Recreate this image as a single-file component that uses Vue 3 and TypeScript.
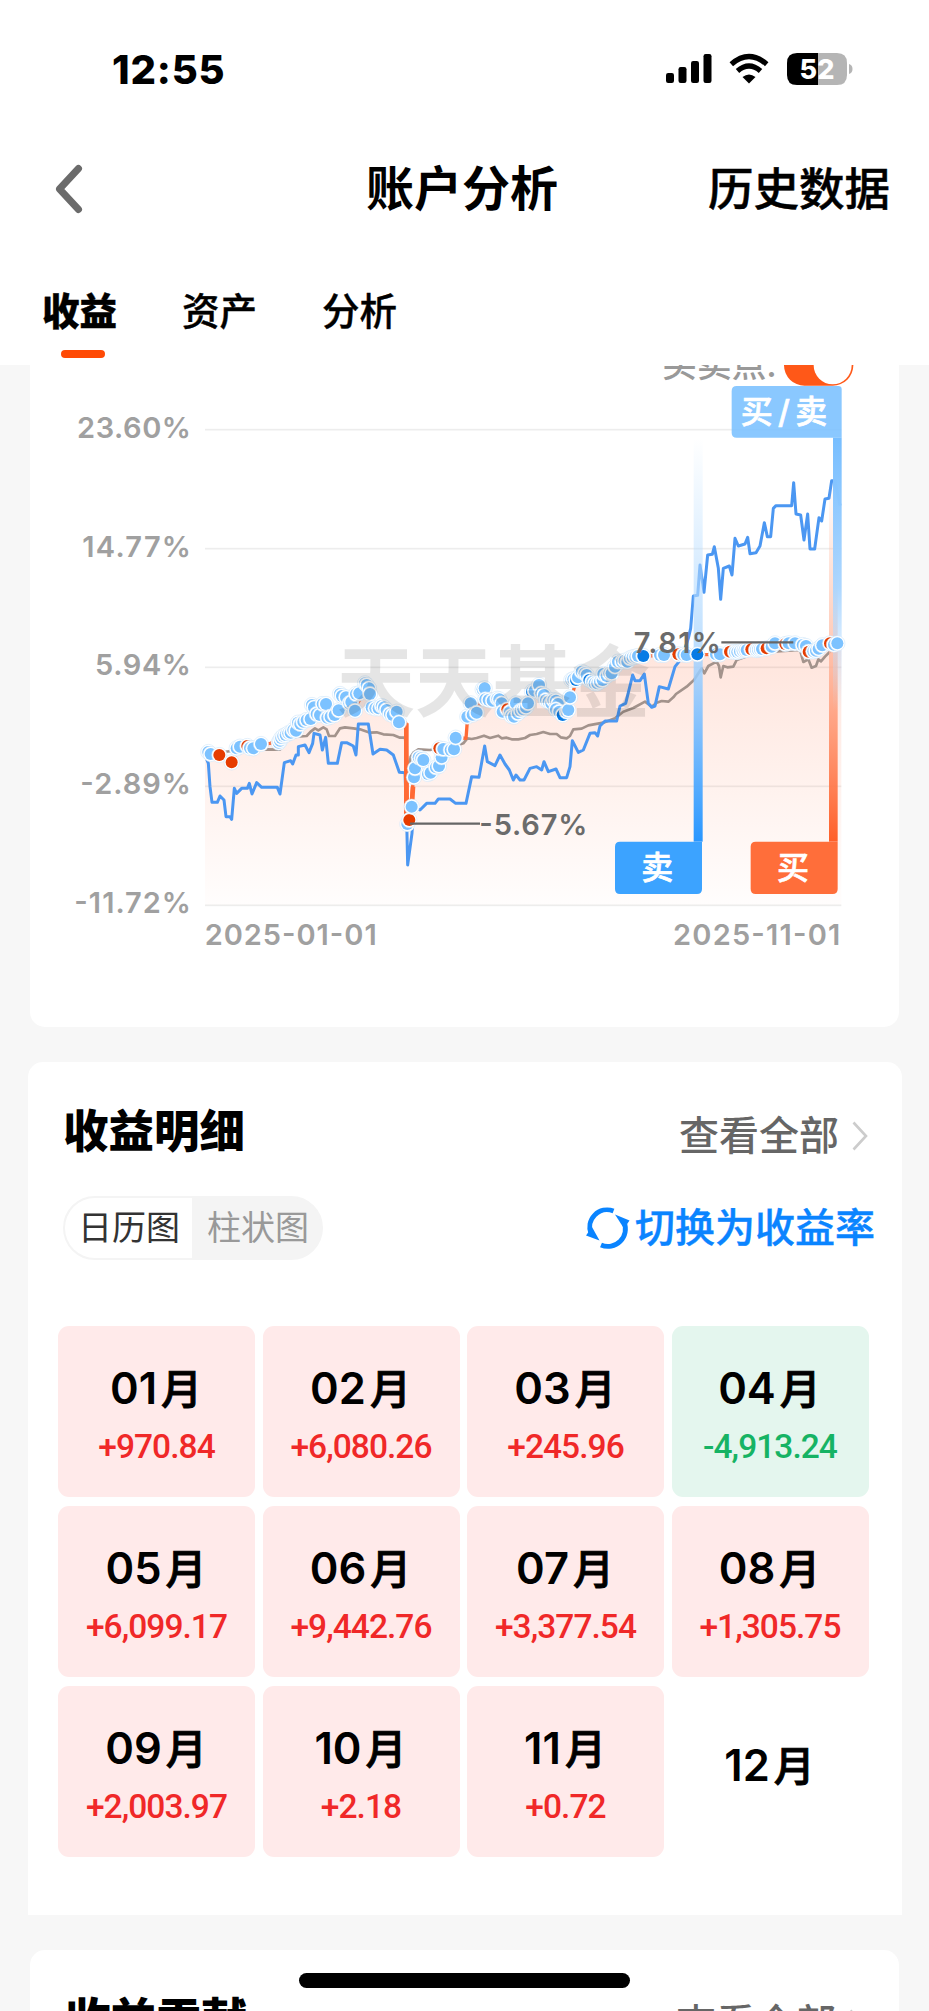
<script setup lang="ts">
interface Month {
  label: string
  amount?: string
}

interface Dot {
  x: number
  y: number
  kind: 'light' | 'dark' | 'red'
}

const tabs = ['收益', '资产', '分析']

const months: Month[] = [
  { label: '01', amount: '+970.84' },
  { label: '02', amount: '+6,080.26' },
  { label: '03', amount: '+245.96' },
  { label: '04', amount: '-4,913.24' },
  { label: '05', amount: '+6,099.17' },
  { label: '06', amount: '+9,442.76' },
  { label: '07', amount: '+3,377.54' },
  { label: '08', amount: '+1,305.75' },
  { label: '09', amount: '+2,003.97' },
  { label: '10', amount: '+2.18' },
  { label: '11', amount: '+0.72' },
  { label: '12' },
]

const tone = (m: Month): string => (!m.amount ? 'empty' : m.amount.startsWith('-') ? 'loss' : 'gain')

const axis = [
  { y: -571, label: '23.60%', w: 342 },
  { y: -214, label: '14.77%', w: 326 },
  { y: 142, label: '5.94%', w: 288 },
  { y: 499, label: '-2.89%', w: 332 },
  { y: 856, label: '-11.72%', w: 350 },
]

const account =
  '45,400 90,403 125,425 150,382 213,372 240,370 270,362 300,338 330,315 362,290 370,262 408,255 446,268 452,230 495,262 530,205 545,258 590,268 620,280 648,310 653,612 662,560 670,480 676,445 690,418 720,455 747,435 790,385 797,353 828,355 833,290 842,250 860,275 884,208 935,250 965,285 1000,268 1030,220 1047,198 1090,242 1130,280 1158,185 1195,160 1220,185 1260,165 1290,125 1340,110 1430,105 1590,103 1690,88 1755,70 1815,68 1850,90 1895,80 1940,70'
const areaPoints = `${account} 1954,70 1954,856 45,856`

const benchmark =
  '45,402 100,396 150,390 230,388 270,389 285,365 300,355 320,350 350,348 362,335 375,325 385,331 400,322 410,328 417,348 435,348 450,325 465,322 490,325 510,328 540,338 560,337 580,343 610,345 630,353 645,353 655,460 662,410 670,398 685,388 720,390 760,382 790,380 820,370 832,355 845,357 860,354 882,347 900,354 925,347 935,355 950,353 965,358 985,358 1005,354 1020,345 1040,342 1060,336 1080,342 1100,342 1112,352 1130,355 1140,348 1150,328 1175,326 1195,316 1240,308 1275,295 1300,275 1330,264 1365,245 1385,260 1400,248 1415,243 1435,245 1450,232 1458,222 1490,200 1512,180 1535,145 1543,160 1555,138 1580,125 1587,138 1592,172 1600,138 1612,142 1630,140 1640,120 1700,98 1830,90 1840,126 1855,118 1865,143 1878,138 1885,118 1893,124 1905,110 1925,90'

const indexLine =
  '45,405 55,430 60,500 66,547 82,547 90,528 102,540 108,590 120,590 125,598 133,505 140,520 155,505 172,505 178,490 186,522 200,488 215,502 262,502 270,522 283,428 302,422 308,432 318,405 325,405 325,380 345,375 357,398 368,370 372,340 390,345 397,390 407,352 415,430 442,430 455,368 470,368 490,378 498,405 505,312 535,312 549,402 570,388 590,390 610,405 628,457 645,458 650,600 653,735 666,640 670,560 690,570 710,550 735,550 745,537 780,537 797,550 828,550 845,470 867,472 884,378 892,425 915,437 930,405 945,432 958,450 970,480 978,465 990,480 1002,480 1020,445 1040,440 1055,450 1062,425 1075,455 1098,447 1110,473 1130,473 1140,440 1147,362 1165,397 1180,390 1200,340 1215,338 1223,348 1230,318 1245,303 1280,303 1290,258 1307,250 1328,165 1335,182 1350,182 1363,162 1375,250 1385,262 1395,258 1408,200 1435,207 1455,140 1475,115 1495,55 1502,25 1510,-72 1523,-74 1530,-165 1542,-83 1553,-195 1567,-197 1573,-220 1585,-155 1592,-62 1600,-155 1618,-162 1626,-135 1635,-245 1645,-222 1665,-228 1673,-248 1680,-199 1698,-202 1710,-222 1723,-292 1732,-250 1742,-250 1750,-335 1758,-343 1805,-343 1811,-412 1818,-318 1832,-315 1842,-240 1853,-318 1860,-213 1874,-213 1887,-307 1895,-297 1905,-363 1917,-365 1925,-418 1935,-418 1950,-343'

const parseDots = (source: string): Dot[] =>
  source.split(' ').map((entry) => {
    const [x, y, k] = entry.split(',')
    return { x: Number(x), y: Number(y), kind: k === 'r' ? 'red' : k === 'd' ? 'dark' : 'light' }
  })

const dots = parseDots(
  '55,396 62,402 88,405,r 125,427,r 140,385 150,380 172,378,r 180,384 190,385 213,372 266,368 270,362 274,354 280,348 287,345 295,340 302,338 310,330 318,332 324,308 331,312 340,305 350,300 362,297 366,255 372,262 380,282 390,285 398,252 408,252 412,293 422,290 434,285 446,271 450,222 456,228 468,232 478,250 484,246 495,272 498,222 508,220 525,190 530,195 537,205 540,222 545,262 556,265 566,265 575,258 582,262 590,270 600,282 608,285 620,275 627,307 652,612 658,600,r 665,560 672,472 675,445 686,412 694,415 700,420 714,462 722,458 738,442 747,438 755,412 748,385,r 760,387 782,390 792,388 797,353 832,290 842,250 848,284 860,278 878,208 884,205 886,238 896,240 908,242 922,236 928,238 935,250 938,275 952,268,r 960,276 964,288 972,290 978,250 984,280 992,272 1000,268 1008,262 1026,215,d 1034,212 1014,250 1047,195 1054,220 1062,225 1068,240 1076,245 1084,250 1090,240 1098,242 1104,252 1098,268 1108,275 1118,285,d 1130,275 1135,270 1140,232 1144,180 1150,178 1158,180,d 1164,172 1175,155 1184,160 1190,165 1198,180,d 1207,185 1214,190 1222,190 1230,185 1238,180 1240,162 1250,168 1258,160 1265,160 1275,140 1284,125 1296,125 1304,122 1312,125 1320,115 1328,112 1336,110 1344,108 1360,108,d 1410,105 1422,105 1465,103,r 1480,104 1490,105 1522,103,d 1578,103 1590,103 1620,95,r 1635,96 1642,96 1650,94 1658,92 1664,90 1670,90 1684,88,r 1698,90 1704,89 1710,88 1716,87 1730,85,r 1745,80 1755,70 1786,72,r 1796,70 1815,70 1838,75 1848,78 1856,95,r 1870,94 1878,92 1886,86 1897,76 1920,70,r 1932,74 1942,70',
)
</script>

<template>
  <div class="screen">
    <header class="top">
      <div class="status">
        <span class="clock">12:55</span>
        <svg class="status-icons" viewBox="0 0 190 40" width="190" height="40">
          <rect x="1" y="23" width="8" height="10" rx="2.2" />
          <rect x="13.500" y="17" width="8" height="16" rx="2.2" />
          <rect x="26" y="11" width="8" height="22" rx="2.2" />
          <rect x="38.500" y="4" width="8" height="29" rx="2.2" />
          <g fill="none" stroke="#000" stroke-width="5.300">
            <path d="M66.300 14.200Q84 -1.200 101.700 14.200" />
            <path d="M72.500 21Q84 11.200 95.500 21" />
          </g>
          <path d="M77.500 27Q84 22 90.500 27L84 33.500Z" />
          <path d="M132 3H153V35H132Q122 35 122 25V13Q122 3 132 3Z" />
          <path d="M153 3H172Q182 3 182 13V25Q182 35 172 35H153Z" fill="#b5b5b5" />
          <path d="M184 14Q187.500 15 187.500 19T184 24Z" fill="#b5b5b5" />
          <text x="152" y="28.500" text-anchor="middle" class="battery">52</text>
        </svg>
      </div>
      <nav class="navbar">
        <svg class="back" viewBox="0 0 30 50" width="30" height="50">
          <path d="M24.500 4.500L5.500 25L24.500 45.500" fill="none" stroke="#6b6b6b" stroke-width="7" stroke-linecap="round" stroke-linejoin="round" />
        </svg>
        <h1>账户分析</h1>
        <a class="history">历史数据</a>
      </nav>
      <div class="tabs">
        <span v-for="(tab, i) in tabs" :key="tab" :class="['tab', { active: i === 0 }]">{{ tab }}</span>
      </div>
    </header>

    <section class="card chart-card">
      <svg viewBox="-480 -765 2607 1986" width="869" height="662">
        <defs>
          <linearGradient id="area" x1="0" y1="0" x2="0" y2="1">
            <stop offset="0" stop-color="#ff4d14" stop-opacity=".15" />
            <stop offset="1" stop-color="#ff4d14" stop-opacity="0.01" />
          </linearGradient>
          <linearGradient id="sell" x1="0" y1="0" x2="0" y2="1">
            <stop offset="0" stop-color="#b9deff" stop-opacity="0" />
            <stop offset=".48" stop-color="#b5dbff" stop-opacity=".8" />
            <stop offset="1" stop-color="#2896ff" />
          </linearGradient>
          <linearGradient id="buy" x1="0" y1="0" x2="0" y2="1">
            <stop offset="0" stop-color="#ffb9a0" stop-opacity="0" />
            <stop offset=".45" stop-color="#ffb9a0" stop-opacity=".75" />
            <stop offset="1" stop-color="#ff5f28" />
          </linearGradient>
          <linearGradient id="both" x1="0" y1="0" x2="0" y2="1">
            <stop offset="0" stop-color="#77beff" />
            <stop offset=".55" stop-color="#a9d5ff" stop-opacity=".95" />
            <stop offset="1" stop-color="#c5e2ff" stop-opacity="0" />
          </linearGradient>
        </defs>

        <text class="switch-label" x="1417" y="-730">买卖点:</text>
        <rect x="1782" y="-826" width="208" height="123" rx="61.500" fill="#ff5818" />
        <circle cx="1928" cy="-764" r="57" fill="#fff" />

        <g v-for="line in axis" :key="line.label">
          <rect x="45" :y="line.y - 2.500" width="1909" height="5" fill="#ededed" />
          <text class="axis-text" :x="3 - line.w" :y="line.y + 24" :textLength="line.w">{{ line.label }}</text>
        </g>
        <text class="axis-text" x="44" y="975" textLength="516">2025-01-01</text>
        <text class="axis-text" x="1449" y="975" textLength="502">2025-11-01</text>

        <polygon :points="areaPoints" fill="url(#area)" />
        <polyline :points="benchmark" class="line benchmark" />
        <polyline :points="indexLine" class="line index" />
        <polyline :points="account" class="line account" />
        <path d="M649 310V600M669 500L666 550" stroke="#ff6a35" stroke-width="14" />
        <rect x="1511" y="-545" width="27" height="1210" fill="url(#sell)" />
        <rect x="1917" y="-420" width="26" height="1085" fill="url(#buy)" />
        <rect x="1929" y="-547" width="26" height="820" fill="url(#both)" />

        <g v-for="(dot, i) in dots" :key="i">
          <circle :cx="dot.x" :cy="dot.y" r="23" fill="#fff" stroke="#c9e3f8" stroke-width="1.500" />
          <circle :cx="dot.x" :cy="dot.y" r="18" :class="dot.kind" />
        </g>

        <text class="watermark" x="440" y="274">天天基金</text>

        <path d="M660 611H870M1594 67H1810" stroke="#666" stroke-width="7" />
        <text class="mark-text" x="868" y="644" textLength="324">-5.67%</text>
        <text class="mark-text" x="1331" y="99" textLength="262">7.81%</text>

        <path d="M1640 -702H1945Q1955 -702 1955 -692V-547H1640Q1625 -547 1625 -562V-687Q1625 -702 1640 -702Z" fill="#79c0ff" fill-opacity=".87" />
        <path d="M1290 665H1536V807Q1536 822 1521 822H1290Q1275 822 1275 807V680Q1275 665 1290 665Z" fill="#3ca3ff" />
        <path d="M1697 665H1943V807Q1943 822 1928 822H1697Q1682 822 1682 807V680Q1682 665 1697 665Z" fill="#ff6e3a" />
        <text class="tag" x="1782" y="-590" text-anchor="middle" textLength="260">买/卖</text>
        <text class="tag" x="1402" y="777" text-anchor="middle">卖</text>
        <text class="tag" x="1809" y="777" text-anchor="middle">买</text>
      </svg>
    </section>

    <section class="card detail">
      <div class="card-head">
        <h2>收益明细</h2>
        <a class="more">
          查看全部
          <svg viewBox="0 0 16 30" width="16" height="30">
            <path d="M1.500 1.500L14 15L1.500 28.500" fill="none" stroke="#ccc" stroke-width="2.600" />
          </svg>
        </a>
      </div>
      <div class="tools">
        <div class="segmented">
          <span class="seg on">日历图</span>
          <span class="seg">柱状图</span>
        </div>
        <a class="switch-mode">
          <svg viewBox="0 0 44 44" width="44" height="44">
            <g fill="none" stroke="#0a84ff" stroke-width="4.800">
              <path d="M27.500 5A17.500 17.500 0 0 0 5 28" />
              <path d="M15 39A17.500 17.500 0 0 0 38 16" />
            </g>
            <path d="M0 29.500L6 21L13.500 34.500Z" fill="#0a84ff" />
            <path d="M43.500 14.500L29 8.500L38 22.500Z" fill="#0a84ff" />
          </svg>
          <span>切换为收益率</span>
        </a>
      </div>
      <div class="months">
        <div v-for="m in months" :key="m.label" :class="['month', tone(m)]">
          <div class="name"><span class="num">{{ m.label }}</span><span class="yue">月</span></div>
          <div v-if="m.amount" class="amount">{{ m.amount }}</div>
        </div>
      </div>
    </section>

    <section class="card contribution">
      <div class="card-head">
        <h2>收益贡献</h2>
        <a class="more">
          查看全部
          <svg viewBox="0 0 16 30" width="16" height="30">
            <path d="M1.500 1.500L14 15L1.500 28.500" fill="none" stroke="#ccc" stroke-width="2.600" />
          </svg>
        </a>
      </div>
    </section>
    <div class="home-indicator"></div>
  </div>
</template>

<style>
body {
  background: #f7f7f7;
}
</style>

<style scoped>
.screen {
  position: relative;
  width: 929px;
  height: 2011px;
  overflow: hidden;
  background: #f7f7f7;
  color: #000;
  font-family: Inter, 'Noto Sans CJK SC', sans-serif;
}
.top {
  height: 365px;
  background: #fff;
}
.status {
  display: flex;
  justify-content: space-between;
  align-items: center;
  height: 139px;
  padding: 0 74px 0 112px;
}
.clock {
  font-size: 40px;
  font-weight: 800;
  letter-spacing: 0.8px;
}
.battery {
  fill: #fff;
  font-size: 27px;
  font-weight: 800;
}
.navbar {
  display: grid;
  grid-template-columns: 240px 1fr 240px;
  align-items: center;
  height: 100px;
  padding: 0 39px 0 54px;
}
h1 {
  margin: 0;
  padding-right: 20px;
  text-align: center;
  font-size: 48px;
  line-height: 60px;
  font-weight: 600;
}
.history {
  padding-top: 2px;
  text-align: right;
  font-size: 45.500px;
  line-height: 60px;
  font-weight: 500;
  -webkit-text-stroke: 0.5px currentColor;
}
.tabs {
  display: flex;
  gap: 65px;
  padding: 45px 42px 0;
}
.tab {
  display: flex;
  flex-direction: column;
  align-items: center;
  height: 81px;
  font-size: 37.500px;
  line-height: 56px;
  font-weight: 500;
  -webkit-text-stroke: 0.4px currentColor;
}
.tab.active {
  font-weight: 800;
}
.tab.active::after {
  content: '';
  width: 44px;
  height: 8px;
  margin: 10px 0 0 7px;
  border-radius: 4px;
  background: #ff4a05;
}
.card {
  background: #fff;
}
.chart-card {
  width: 869px;
  height: 662px;
  margin: 0 30px;
  overflow: hidden;
  border-radius: 0 0 15px 15px;
}
.chart-card svg {
  display: block;
}
.switch-label {
  font-size: 104px;
  font-weight: 500;
  fill: #999;
}
.axis-text {
  font-size: 87px;
  font-weight: 600;
  fill: #a0a0a0;
}
.mark-text {
  font-size: 87px;
  font-weight: 600;
  fill: #6b6b6b;
}
.tag {
  font-size: 96px;
  font-weight: 500;
  fill: #fff;
  stroke: #fff;
  stroke-width: 2;
}
.watermark {
  font-size: 235px;
  font-weight: 700;
  fill: #000;
  fill-opacity: 0.1;
}
.line {
  fill: none;
  stroke-width: 8;
  stroke-linejoin: round;
}
.line.benchmark {
  stroke: #a3938c;
}
.line.index {
  stroke: #4b97f2;
  stroke-width: 9;
}
.line.account {
  stroke: #ff6a35;
  stroke-width: 10;
}
.light {
  fill: #7cc2ff;
}
.dark {
  fill: #087be5;
}
.red {
  fill: #e63c00;
}
.detail {
  height: 853px;
  margin: 35px 27px 0 28px;
  border-radius: 15px 15px 0 0;
}
.card-head {
  display: flex;
  justify-content: space-between;
  align-items: flex-start;
  padding: 37px 34px 0 35px;
}
h2 {
  margin: 0;
  font-size: 45.500px;
  line-height: 66px;
  font-weight: 800;
}
.more {
  display: flex;
  align-items: center;
  gap: 13px;
  padding-top: 4px;
  font-size: 40px;
  line-height: 66px;
  font-weight: 500;
  color: #666;
}
.tools {
  display: flex;
  justify-content: space-between;
  align-items: center;
  height: 64px;
  margin-top: 27px;
  padding: 0 27px 0 35px;
}
.segmented {
  display: flex;
  box-sizing: border-box;
  width: 260px;
  height: 64px;
  overflow: hidden;
  border: 2px solid #f4f4f4;
  border-radius: 32px;
  background: #f4f4f4;
}
.seg {
  flex: 1;
  padding-left: 3px;
  text-align: center;
  font-size: 34px;
  line-height: 59px;
  color: #999;
}
.seg.on {
  padding-left: 1px;
  background: #fff;
  color: #333;
}
.switch-mode {
  display: flex;
  align-items: center;
  gap: 5px;
  font-size: 40px;
  line-height: 60px;
  font-weight: 500;
  color: #0a84ff;
  -webkit-text-stroke: 0.4px currentColor;
}
.months {
  display: grid;
  grid-template-columns: repeat(4, 197px);
  grid-auto-rows: 171px;
  gap: 9px 7.500px;
  margin: 66px 0 0 30px;
}
.month {
  display: flex;
  flex-direction: column;
  align-items: center;
  box-sizing: border-box;
  padding-top: 32px;
  border-radius: 11px;
}
.gain {
  background: #ffeaea;
  color: #f02828;
}
.loss {
  background: #e4f6ee;
  color: #16b364;
}
.month.empty {
  padding-top: 49px;
}
.name {
  display: flex;
  align-items: center;
  gap: 4px;
  height: 60px;
  padding-right: 1px;
  color: #000;
}
.num {
  font-size: 43.500px;
  font-weight: 600;
}
.yue {
  padding-bottom: 5px;
  font-size: 41px;
  font-weight: 500;
  -webkit-text-stroke: 0.9px currentColor;
}
.amount {
  margin-top: 9px;
  font-family: Roboto, sans-serif;
  font-size: 33.500px;
  line-height: 40px;
  font-weight: 500;
  letter-spacing: -0.95px;
}
.contribution {
  height: 80px;
  margin: 35px 30px 0;
  border-radius: 15px;
}
.home-indicator {
  position: absolute;
  left: 299px;
  top: 1973px;
  width: 331px;
  height: 15px;
  border-radius: 8px;
  background: #000;
}
</style>
